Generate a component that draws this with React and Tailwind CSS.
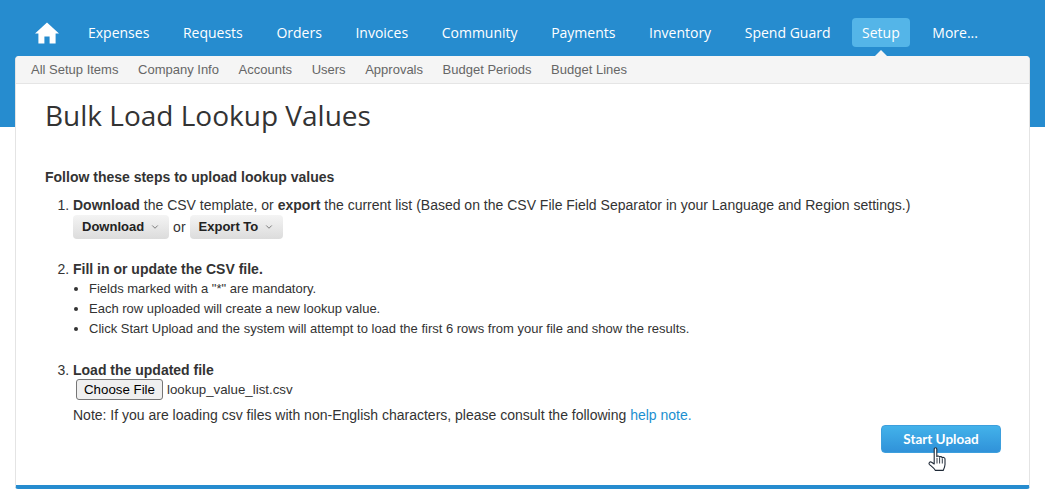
import React from 'react';
import { ChevronDown } from 'lucide-react';

const navItems = ['Expenses', 'Requests', 'Orders', 'Invoices', 'Community', 'Payments', 'Inventory', 'Spend Guard', 'Setup', 'More...'];
const subItems = ['All Setup Items', 'Company Info', 'Accounts', 'Users', 'Approvals', 'Budget Periods', 'Budget Lines'];

const HomeIcon = () => (
    <svg width="24" height="22" viewBox="0 0 24 22" className="block">
        <path d="M12 0.5 L24 11.6 L20.6 11.6 L20.6 21.5 L14.6 21.5 L14.6 14.6 L9.4 14.6 L9.4 21.5 L3.4 21.5 L3.4 11.6 L0 11.6 Z" fill="#fff" />
    </svg>
);

const HandCursor = () => (
    <svg width="20" height="25" viewBox="0 0 20 25" className="absolute left-[47px] top-[22px]">
        <path
            d="M6.2 2 C6.2 0.3 8.8 0.3 8.8 2 L8.8 9.6 C9.3 8.8 11.2 8.8 11.5 10.2 C12 9.3 13.9 9.4 14.2 10.8 C14.8 10 16.8 10.3 17 11.9 L17 17.6 C17 19.6 16.2 21.2 15.2 23.4 L7.4 23.4 C6.4 21.4 4.2 19.8 1.6 17.6 C0.2 16.2 1.8 14.2 3.6 15.2 L6.2 17 Z"
            fill="#fff"
            stroke="#1f2937"
            strokeWidth="1.1"
            strokeLinejoin="round"
        />
        <path d="M9 11 V16.5 M11.6 11 V16.5 M14.3 11.5 V16.5" stroke="#1f2937" strokeWidth="0.9" fill="none" />
    </svg>
);

const GrayButton = ({ label }) => (
    <button className="inline-flex items-center h-[24px] px-[9px] rounded-[4px] bg-gradient-to-b from-[#f4f4f4] to-[#dcdcdc] text-[13px] font-bold text-[#222]">
        {label}
        <ChevronDown className="ml-[6px] w-[10px] h-[10px] text-[#666]" />
    </button>
);

const App = () => {
    return (
        <div className="relative w-[1045px] h-[494px] overflow-hidden bg-white font-['Liberation_Sans',Arial,sans-serif] text-[#333]">
            <div className="absolute inset-x-0 top-0 h-[127px] bg-[#268ccf]" />

            <div className="relative">
                <nav className="flex items-center h-[56px] pl-[35px] pt-[18px] pb-[9px] font-['Open_Sans',sans-serif] text-[14px] text-white">
                    <a className="mr-[18px] block">
                        <HomeIcon />
                    </a>
                    <div className="flex gap-[11.6px]">
                        {navItems.map((item) => (
                            <a
                                key={item}
                                className={item === 'Setup'
                                    ? 'relative px-[10px] -ml-[1px] h-[29px] leading-[29px] rounded-[4px] bg-[#54b5e8]'
                                    : 'relative px-[11px] h-[29px] leading-[29px] rounded-[4px]'}
                            >
                                {item}
                                {item === 'Setup' && (
                                    <span className="absolute left-1/2 -translate-x-1/2 top-[32px] w-0 h-0 border-x-[6px] border-x-transparent border-b-[6px] border-b-[#f5f5f5]" />
                                )}
                            </a>
                        ))}
                    </div>
                </nav>

                <div className="mx-[15px] w-[1015px] h-[433px] flex flex-col bg-white rounded-t-[4px] border-x border-[#e4e4e4] border-b-[4px] border-b-[#268ccf] rounded-b-[3px]">
                    <div className="flex items-center gap-[19.6px] h-[28px] pl-[15px] bg-[#f5f5f5] border-b border-[#e5e5e5] rounded-t-[4px] text-[13px] text-[#666]">
                        {subItems.map((item) => (
                            <a key={item}>{item}</a>
                        ))}
                    </div>

                    <div className="relative flex-1 pl-[29px] pr-[28px]">
                        <h1 className="mt-[12px] text-[28px] leading-[38px] font-['Open_Sans',sans-serif] text-[#333]">Bulk Load Lookup Values</h1>
                        <p className="mt-[33px] text-[14px] leading-[20px] font-bold">Follow these steps to upload lookup values</p>

                        <ol className="mt-[8px] pl-[28px] list-decimal text-[14px] leading-[20px]">
                            <li>
                                <b>Download</b> the CSV template, or <b>export</b> the current list (Based on the CSV File Field Separator in your Language and Region settings.)
                                <div className="flex items-center gap-[4px]">
                                    <GrayButton label="Download" />
                                    <span>or</span>
                                    <GrayButton label="Export To" />
                                </div>
                            </li>
                            <li className="mt-[20px]">
                                <b>Fill in or update the CSV file.</b>
                                <ul className="pl-[16px] list-disc text-[13px] leading-[20px]">
                                    <li>Fields marked with a "*" are mandatory.</li>
                                    <li>Each row uploaded will create a new lookup value.</li>
                                    <li>Click Start Upload and the system will attempt to load the first 6 rows from your file and show the results.</li>
                                </ul>
                            </li>
                            <li className="mt-[21px]">
                                <b>Load the updated file</b>
                                <div className="flex items-center h-[21px] ml-[3px] -mt-[1px] text-[13.3px]">
                                    <button className="h-[21px] w-[87px] mr-[4px] rounded-[3px] border border-[#767676] bg-[#efefef] text-[13.3px] text-black">Choose File</button>
                                    lookup_value_list.csv
                                </div>
                                <p className="mt-[5px]">
                                    Note: If you are loading csv files with non-English characters, please consult the following <a className="text-[#1b8fd0]">help note.</a>
                                </p>
                            </li>
                        </ol>

                        <div className="absolute right-[28px] top-[341px]">
                            <button className="w-[120px] h-[28px] rounded-[4px] bg-gradient-to-b from-[#43b2ea] to-[#3092d9] border border-[#3d9fdd] font-['Lato',sans-serif] font-bold text-[13.5px] text-white">
                                Start Upload
                            </button>
                            <HandCursor />
                        </div>
                    </div>
                </div>
            </div>
        </div>
    );
};

export default App;
